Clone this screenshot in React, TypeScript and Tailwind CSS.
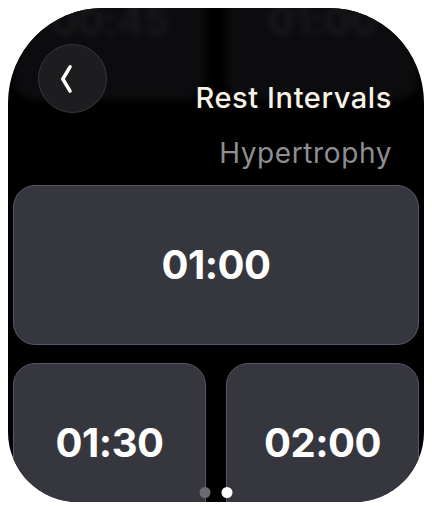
import React from "react";

const sans = { fontFamily: "Inter, 'Noto Sans', sans-serif" };

function Tile({ label, faded = false, wide = false }: { label: string; faded?: boolean; wide?: boolean }) {
  const size = wide ? "w-full shrink-0" : "flex-1";
  if (faded) {
    return (
      <div className={`flex h-[158px] items-center justify-center rounded-[22px] bg-[#0c0c0e] ${size}`}>
        <span className="text-[40px] font-bold tracking-[-0.5px] text-[#19191b]">{label}</span>
      </div>
    );
  }
  return (
    <div
      className={`flex h-[160px] items-center justify-center rounded-[22px] border-[1.5px] border-[#575767] bg-[#36363f] ${size}`}
    >
      <span className="text-[40px] font-bold tracking-[-0.5px] text-white">{label}</span>
    </div>
  );
}

export default function App() {
  return (
    <div className="h-[512px] w-[432px] bg-white px-[8px] pt-[8px]" style={sans}>
      <div className="relative h-[494px] w-[416px] overflow-hidden rounded-t-[95px] rounded-b-[70px] bg-black">
        {/* previous row scrolled under the header */}
        <div className="absolute left-0 right-0 top-[-66px] flex gap-[20px] px-[5px] blur-[3px]">
          <Tile label="00:45" faded />
          <Tile label="01:00" faded />
        </div>

        <div className="relative flex flex-col">
          {/* header */}
          <div className="flex h-[177px] shrink-0 flex-col">
            <div className="flex items-end pt-[36px] pl-[30px] pr-[32px]">
              <button className="flex h-[69px] w-[69px] shrink-0 items-center justify-center rounded-full border-[1.5px] border-[#38383b] bg-[#1d1d1f]">
                <svg width="69" height="69" viewBox="0 0 69 69" fill="none">
                  <path
                    d="M32 22.5 L24.5 35 L32 47.5"
                    stroke="white"
                    strokeWidth="3.6"
                    strokeLinecap="round"
                    strokeLinejoin="round"
                  />
                </svg>
              </button>
              <div className="ml-auto mb-[-2px] whitespace-nowrap text-[29px] font-medium leading-[34px] tracking-[0.6px] text-[#f7f1e6]">
                Rest Intervals
              </div>
            </div>
            <div className="mt-[24px] pr-[32px] text-right text-[28px] leading-[32px] tracking-[0.6px] text-[#8e8e93]">
              Hypertrophy
            </div>
          </div>

          {/* interval options */}
          <div className="flex flex-col gap-[18px] px-[5px]">
            <Tile label="01:00" wide />
            <div className="flex gap-[20px]">
              <Tile label="01:30" />
              <Tile label="02:00" />
            </div>
          </div>
        </div>

        {/* page indicator */}
        <div className="absolute bottom-[4px] left-1/2 flex -translate-x-1/2 gap-[11px]">
          <div className="h-[11px] w-[11px] rounded-full bg-[#6a6a70]" />
          <div className="h-[11px] w-[11px] rounded-full bg-white" />
        </div>
      </div>
    </div>
  );
}
